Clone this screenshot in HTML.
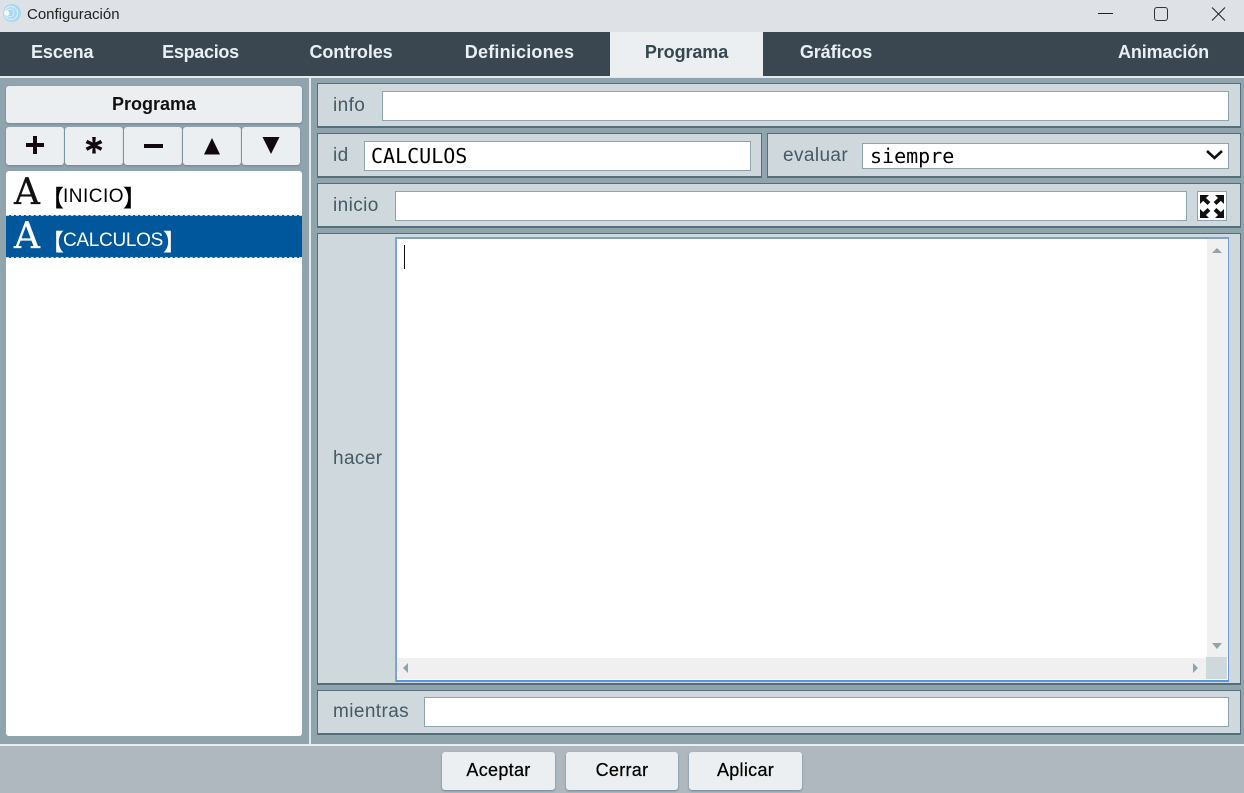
<!DOCTYPE html>
<html><head><meta charset="utf-8"><style>
html,body{margin:0;padding:0}
body{width:1244px;height:793px;position:relative;overflow:hidden;background:#90a4ae;font-family:"Liberation Sans",sans-serif}
div,span{position:absolute;box-sizing:border-box;white-space:nowrap}
svg{position:absolute}
.tab{top:32px;height:44px;line-height:41px;font-size:18px;font-weight:bold;color:#e8f0f5;text-align:center;letter-spacing:-.1px}
.btn{background:#eceff1;border-radius:3px;box-shadow:0 1px 2px #6f8490;text-align:center}
.row{background:#cfd8dc;border:1px solid #546e7a;border-width:1px 1px 2px 1px;left:317px;width:924px}
.lab{font-size:19px;letter-spacing:.4px;color:#455a64;line-height:24px}
.inp{background:#fff;border:1px solid #90a4ae}
.foot{top:752px;height:38px;line-height:37px;font-size:18px;letter-spacing:.3px;color:#000;-webkit-text-stroke:.25px #000}
.mono{font-family:"DejaVu Sans Mono","Liberation Mono",monospace;font-size:20px;color:#000}
.a{font-family:"DejaVu Serif",serif;font-size:36px;line-height:42px;-webkit-text-stroke:.3px currentColor}
.br{font-family:"Noto Sans CJK JP",sans-serif;font-weight:bold;font-size:23px;line-height:24px}
.it{font-size:19px;line-height:24px}
</style></head><body>
<div style="left:0;top:0;width:1244px;height:32px;background:#dee1e6"></div>
<svg style="left:2px;top:2px" width="20" height="22" viewBox="0 0 20 22"><circle cx="10" cy="11" r="9" fill="#a9d8f2"/><circle cx="9" cy="11" r="6.500" fill="none" stroke="#e3f1f8" stroke-width="1"/><circle cx="8" cy="11" r="4" fill="none" stroke="#e3f1f8" stroke-width="1"/><circle cx="5" cy="11" r="2.500" fill="#fff"/></svg>
<div style="left:27px;top:6px;font-size:15px;line-height:18px;color:#222">Configuración</div>
<svg style="left:1090px;top:0" width="150" height="28" fill="none" stroke="#222" stroke-width="1"><path d="M8 13.500H23"/><rect x="64.500" y="7.500" width="13" height="13" rx="2.500" stroke="#333"/><path d="M122 7.500L135 20.500M135 7.500L122 20.500"/></svg>

<div style="left:0;top:32px;width:1244px;height:44px;background:#3a4750"></div>
<div class="tab" style="left:31px;width:62px">Escena</div>
<div class="tab" style="left:162px;width:77px;letter-spacing:-.3px">Espacios</div>
<div class="tab" style="left:308px;width:86px">Controles</div>
<div class="tab" style="left:464px;width:111px;letter-spacing:.2px">Definiciones</div>
<div class="tab" style="left:610px;width:153px;height:45px;background:#eceff1;color:#37474f">Programa</div>
<div class="tab" style="left:799px;width:74px">Gráficos</div>
<div class="tab" style="left:1116px;width:95px">Animación</div>
<div style="left:0;top:76px;width:1244px;height:2px;background:#e4e9ec"></div>
<div style="left:610px;top:76px;width:153px;height:1px;background:#eceff1"></div>

<div class="btn" style="left:6px;top:86px;width:296px;height:37px;line-height:36px;font-size:18px;color:#111;font-weight:bold">Programa</div>
<div class="btn" style="left:6px;top:127px;width:58px;height:38px"></div>
<div class="btn" style="left:65px;top:127px;width:58px;height:38px"></div>
<div class="btn" style="left:124px;top:127px;width:58px;height:38px"></div>
<div class="btn" style="left:183px;top:127px;width:58px;height:38px"></div>
<div class="btn" style="left:242px;top:127px;width:58px;height:38px"></div>
<svg style="left:0;top:127px" width="302" height="38" fill="#120812"><path d="M33 9h4v7h7v4h-7v7h-4v-7h-7v-4h7z"/><path d="M92.200 10h3.600l-.4 5.500 5.200-2.600 1.800 3.200-5.200 2.200 5.200 2.400-1.800 3.100-5.200-2.900.4 5.600h-3.600l.4-5.600-5.200 2.900-1.800-3.100 5.200-2.400-5.200-2.200 1.800-3.200 5.200 2.600z"/><path d="M144 17h19v4h-19z"/><path d="M212 11l8 16.500h-16z"/><path d="M262.500 10h17l-8.500 17z"/></svg>

<div style="left:6px;top:171px;width:296px;height:565px;background:#fff;border-radius:3px"></div>
<div style="left:6px;top:215px;width:296px;height:43px;background:#01579b;border-top:1px dashed #cfd8dc;border-bottom:1px dashed #cfd8dc"></div>
<div class="a" style="left:14px;top:172px;color:#111">A</div>
<div class="a" style="left:14px;top:216px;color:#fff">A</div>
<div class="br" style="left:41px;top:184px;color:#000">【</div>
<div class="it" style="left:63px;top:185px;color:#000;letter-spacing:.5px">INICIO</div>
<div class="br" style="left:123px;top:184px;color:#000">】</div>
<div class="br" style="left:41px;top:228px;color:#fff">【</div>
<div class="it" style="left:63px;top:229px;color:#fff;letter-spacing:-.3px">CALCULOS</div>
<div class="br" style="left:163px;top:228px;color:#fff">】</div>

<div style="left:309px;top:78px;width:2px;height:666px;background:#e4e9ec"></div>

<div class="row" style="top:83px;height:45px"></div>
<div class="lab" style="left:333px;top:94px">info</div>
<div class="inp" style="left:382px;top:91px;width:847px;height:30px"></div>

<div class="row" style="top:133px;height:45px;width:445px"></div>
<div class="lab" style="left:333px;top:144px">id</div>
<div class="inp" style="left:364px;top:141px;width:387px;height:30px"></div>
<div class="mono" style="left:371px;top:144px;line-height:24px">CALCULOS</div>
<div class="row" style="left:767px;top:133px;height:45px;width:474px"></div>
<div class="lab" style="left:783px;top:144px">evaluar</div>
<div class="inp" style="left:862px;top:143px;width:367px;height:26px"></div>
<div class="mono" style="left:870px;top:144px;line-height:24px">siempre</div>
<svg style="left:1205px;top:148px" width="22" height="16" fill="none" stroke="#111" stroke-width="2.600"><path d="M2 3L9.500 10L17 3"/></svg>

<div class="row" style="top:183px;height:45px"></div>
<div class="lab" style="left:333px;top:194px">inicio</div>
<div class="inp" style="left:395px;top:191px;width:792px;height:30px"></div>
<div class="inp" style="left:1197px;top:191px;width:30px;height:30px"></div>
<svg style="left:1197px;top:191px" width="30" height="30" fill="#111" stroke="#111"><g stroke="none"><path d="M3 4h9l-9 9z"/><path d="M27 4h-9l9 9z"/><path d="M3 27h9l-9-9z"/><path d="M27 27h-9l9-9z"/></g><g stroke-width="4" fill="none"><path d="M6 7L12 12.500M24 7L18 12.500M6 24L12 18.500M24 24L18 18.500"/></g></svg>

<div class="row" style="top:233px;height:452px"></div>
<div class="lab" style="left:333px;top:447px">hacer</div>
<div style="left:395px;top:237px;width:834px;height:445px;background:#fff;border:2px solid #6f9bdc;border-top-color:#80a0c8;border-left-color:#7fa3d8;border-right-width:1px;border-bottom-color:#5a96e6"></div>
<div style="left:1207px;top:239px;width:21px;height:419px;background:#f0f0f0"></div>
<div style="left:397px;top:658px;width:810px;height:21px;background:#f0f0f0"></div>
<div style="left:1206px;top:657px;width:21px;height:22px;background:#cfd8dc"></div>
<div style="left:404px;top:245px;width:1px;height:24px;background:#111"></div>
<svg style="left:395px;top:237px" width="834" height="445" fill="#90a4ae"><path d="M817 16l5-5 5 5z"/><path d="M817 406h10l-5 6z"/><path d="M16 431v-10l-5 5z" transform="translate(-3,5)"/><path d="M798 426l5 5-5 5z"/></svg>

<div class="row" style="top:690px;height:45px"></div>
<div class="lab" style="left:333px;top:700px">mientras</div>
<div class="inp" style="left:424px;top:697px;width:805px;height:30px"></div>

<div style="left:0;top:744px;width:1244px;height:49px;background:#b0b8bf;border-top:2px solid #e8ecef"></div>
<div class="btn foot" style="left:442px;width:113px">Aceptar</div>
<div class="btn foot" style="left:566px;width:112px">Cerrar</div>
<div class="btn foot" style="left:689px;width:113px">Aplicar</div>
</body></html>
